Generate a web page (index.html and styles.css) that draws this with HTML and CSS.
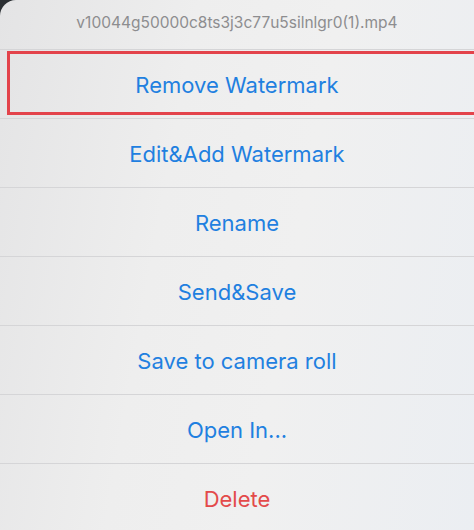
FILE: index.html
```html
<!DOCTYPE html>
<html>
<head>
<meta charset="utf-8">
<link rel="stylesheet" href="styles.css">
</head>
<body>
<div class="sheet">
  <div class="title">v10044g50000c8ts3j3c77u5silnlgr0(1).mp4</div>
  <div class="item">Remove Watermark</div>
  <div class="item">Edit&amp;Add Watermark</div>
  <div class="item">Rename</div>
  <div class="item">Send&amp;Save</div>
  <div class="item">Save to camera roll</div>
  <div class="item">Open In...</div>
  <div class="item danger">Delete</div>
  <div class="highlight"></div>
</div>
</body>
</html>
```
FILE: styles.css
```css
html, body {
  margin: 0;
  padding: 0;
}
body {
  width: 474px;
  height: 530px;
  overflow: hidden;
  background: #2b2f33;
  font-family: Inter, "Liberation Sans", sans-serif;
}
.sheet {
  position: relative;
  height: 530px;
  border-top-left-radius: 16px;
  background: linear-gradient(100deg, #e4e4e5 0%, #eeeeee 35%, #f0f0f0 60%, #ebeef2 100%);
  display: flex;
  flex-direction: column;
  overflow: hidden;
}
.title {
  height: 50px;
  flex: none;
  display: flex;
  align-items: center;
  justify-content: center;
  color: #8d8d8f;
  font-size: 15.5px;
  padding-bottom: 5px;
  box-sizing: border-box;
  border-bottom: 1px solid #d5d5d7;
}
.item {
  height: 69px;
  flex: none;
  display: flex;
  align-items: center;
  justify-content: center;
  color: #1f80e0;
  font-size: 22px;
  padding-top: 2px;
  border-bottom: 1px solid #d5d5d7;
  box-sizing: border-box;
}
.item.danger {
  color: #e34a4a;
  border-bottom: none;
  padding-top: 0;
}
.highlight {
  position: absolute;
  left: 7px;
  top: 51px;
  width: 480px;
  height: 64px;
  border: 3px solid #e3434b;
  box-sizing: border-box;
}
```
